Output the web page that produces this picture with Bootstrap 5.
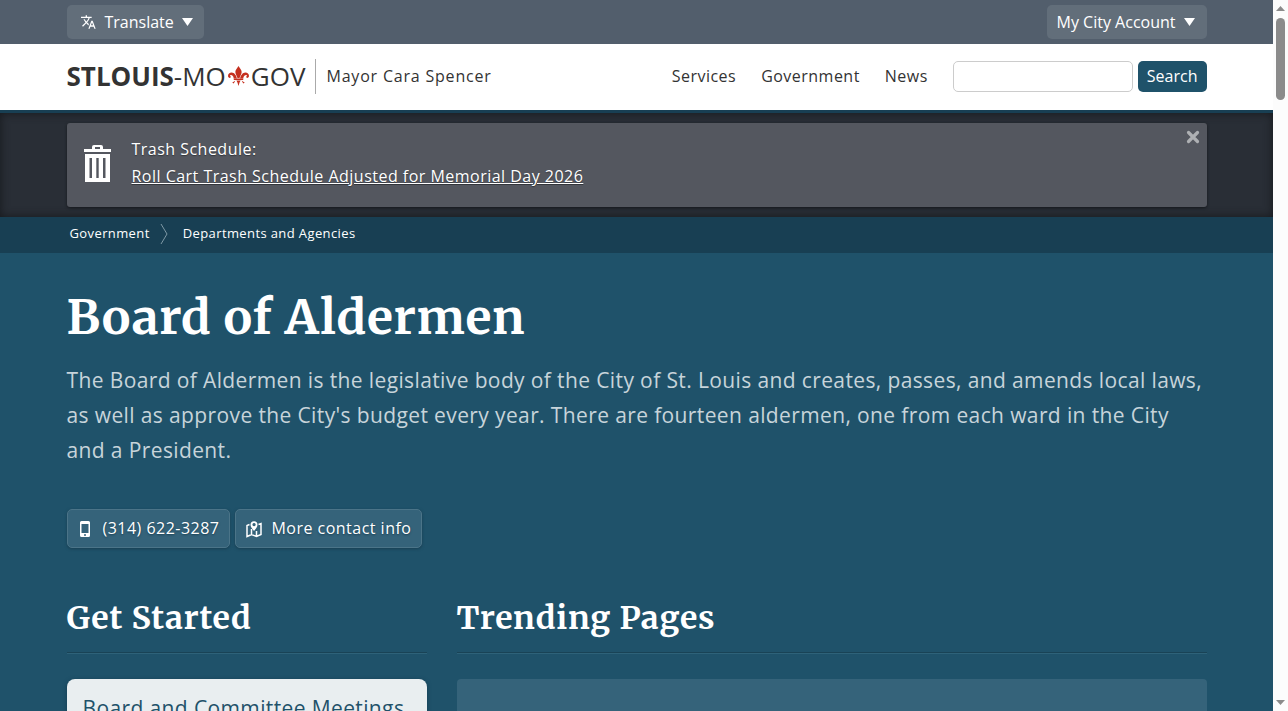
<!DOCTYPE html>
<html lang="en">
<head>
<meta charset="utf-8">
<meta name="viewport" content="width=device-width, initial-scale=1">
<title>Board of Aldermen</title>
<link href="https://cdn.jsdelivr.net/npm/bootstrap@5.3.0/dist/css/bootstrap.min.css" rel="stylesheet">
<style>
  body { font-family: "Open Sans", "Noto Sans", sans-serif; font-size: 16px; letter-spacing: .03em; background: #1f526a; color: #fff; }
  h1, h2 { font-family: Merriweather, "Noto Serif", serif; font-weight: 700; }
  .shell { height: 100vh; }
  .site-wrap { max-width: 1140px; width: 100%; margin: 0 auto; }
  .topbar { background: #525e6c; padding: 5px 0; }
  .btn-top { --bs-btn-color: #fff; --bs-btn-bg: #626e7a; --bs-btn-hover-color: #fff; --bs-btn-hover-bg: #6d7985; --bs-btn-border-width: 0; --bs-btn-border-radius: 5px; --bs-btn-padding-x: 10px; --bs-btn-padding-y: 5px; letter-spacing: normal; }
  .masthead { background: #fff; border-bottom: 3px solid #183f53; min-height: 69px; padding-bottom: 2px; color: #333; }
  .masthead a { color: #333; text-decoration: none; }
  .wordmark { font-size: 26px; line-height: 35px; letter-spacing: normal; padding-right: 10px; border-right: 1px solid #aaa; }
  .wordmark svg { margin: 0 2px; }
  .mayor { letter-spacing: .05em; padding-left: 10px; }
  .links { gap: 25px; margin-right: 25px; }
  .search-form { gap: 5px; }
  .search-box { width: 180px; height: 31px; min-height: 0; padding: 0 8px; line-height: 24px; border-color: #ccc; border-radius: 5px; }
  .btn-search { --bs-btn-color: #fff; --bs-btn-bg: #1f526a; --bs-btn-hover-color: #fff; --bs-btn-hover-bg: #183f53; --bs-btn-border-width: 0; --bs-btn-border-radius: 5px; --bs-btn-padding-x: 9px; --bs-btn-padding-y: 0; height: 31px; letter-spacing: normal; }
  .notice-band { background: #292e36; box-shadow: inset 0 0 10px #16191d; padding: 10px 0; }
  .notice { background: #54575f; border-radius: 3px; box-shadow: 0 1px 3px #15181c; padding: 13px 16px 17px; line-height: 27px; text-shadow: 0 1px 1px #33363c; }
  .notice-text { margin-left: 20px; }
  .dismiss { top: 0; right: 0; padding: 7px; line-height: 0; }
  .trail-band { background: #183f53; }
  .trail { font-size: 13px; letter-spacing: .03em; min-height: 36px; padding: 0 3px 2px; }
  .trail a { color: #fff; text-decoration: none; }
  .trail svg { margin: 0 15px 0 10px; }
  h1 { font-size: 48px; line-height: 60px; letter-spacing: .015em; margin: 34px 0 16px; }
  .intro { font-size: 21px; line-height: 35px; letter-spacing: .018em; color: #c7d4da; margin-bottom: 41px; }
  .contacts { gap: 5px; }
  .btn-contact { --bs-btn-color: #fff; --bs-btn-bg: #35637a; --bs-btn-border-color: #4b7488; --bs-btn-hover-color: #fff; --bs-btn-hover-bg: #40708a; --bs-btn-border-radius: 5px; --bs-btn-padding-x: 10px; --bs-btn-padding-y: 6px; --bs-btn-line-height: 25px; box-shadow: 0 1px 3px #183f53; text-shadow: 0 1px 2px #183f53; gap: 9px; }
  .topics { margin-top: 49px; gap: 30px; }
  .topic-start { flex: 0 0 360px; }
  h2 { font-size: 32px; line-height: 42px; letter-spacing: .025em; padding-bottom: 13px; margin-bottom: 26px; border-bottom: 1px solid #194356; box-shadow: 0 1px 0 #2e6279; }
  .meeting-card { background: #e9eef0; border-radius: 8px; box-shadow: 0 1px 4px #153c50; padding: 12px 16px; font-size: 21px; line-height: 35px; letter-spacing: .018em; min-height: 80px; }
  .meeting-card a { color: #1f526a; text-decoration: none; }
  .trend-card { background: #35637a; border-radius: 4px; min-height: 80px; }
  .scroll-rail { flex: 0 0 15px; background: #fcfcfc; padding: 6px 0; }
  .scroll-grip { width: 9px; height: 82px; border-radius: 5px; background: #8b8b8b; margin-top: 7px; }
</style>
</head>
<body>
<div class="shell d-flex overflow-hidden">
  <div class="flex-fill overflow-hidden">
    <div class="topbar">
      <div class="site-wrap d-flex justify-content-between">
        <button type="button" class="btn btn-top d-flex align-items-center gap-2">
          <svg width="20" height="16" viewBox="-4 0 28 24" fill="#fff" aria-hidden="true"><path d="M12.900 15.100l-2.600-2.500.1-.1A17.500 17.500 0 0 0 14.100 6H17V4h-7V2H8v2H1v2h11.200A15.700 15.700 0 0 1 9 11.400 15.700 15.700 0 0 1 6.700 8h-2a17.600 17.600 0 0 0 3 4.600L2.600 17.600 4 19l5-5 3.100 3.100.8-2zM18.500 10h-2L12 22h2l1.100-3h4.800l1.100 3h2l-4.500-12zm-2.600 7l1.600-4.300 1.600 4.300h-3.200z"/></svg>
          Translate
          <svg width="12" height="8" viewBox="0 0 12 8" aria-hidden="true"><path d="M0 0h11L5.500 8z" fill="#fff"/></svg>
        </button>
        <button type="button" class="btn btn-top d-flex align-items-center gap-2">
          My City Account
          <svg width="13" height="8" viewBox="0 0 13 8" aria-hidden="true"><path d="M0 0h11L5.500 8z" fill="#fff"/></svg>
        </button>
      </div>
    </div>

    <header class="masthead d-flex align-items-center">
      <div class="site-wrap d-flex align-items-center">
        <a class="wordmark d-flex align-items-center" href="#"><span><b>STLOUIS</b>-MO</span><svg width="21" height="20" viewBox="0 0 40 40" preserveAspectRatio="none" fill="#c5301f" aria-hidden="true"><path d="M20 0c3 5 6 8 6 12 0 4-3 8-4 12h-4c-1-4-4-8-4-12 0-4 3-7 6-12z"/><path d="M17 25c-1-6-5-12-10-12-4 0-7 3-7 7 0 3 3 5 5 3 1-2-1-3-1-4 1-2 6-1 7 6zM23 25c1-6 5-12 10-12 4 0 7 3 7 7 0 3-3 5-5 3-1-2 1-3 1-4-1-2-6-1-7 6z"/><path d="M11 25h18v3H11zM16 29h8l-2 4-2 7-2-7zM14 29l-3 6-3-2 2-1zM26 29l3 6 3-2-2-1z"/></svg><span>GOV</span></a>
        <a class="mayor" href="#">Mayor Cara Spencer</a>
        <nav class="links d-flex ms-auto" aria-label="Main">
          <a href="#">Services</a><a href="#">Government</a><a href="#">News</a>
        </nav>
        <form class="search-form d-flex" role="search">
          <label class="visually-hidden" for="q">Search this site</label>
          <input class="form-control search-box" id="q" type="search">
          <button class="btn btn-search" type="submit">Search</button>
        </form>
      </div>
    </header>

    <div class="notice-band">
      <div class="site-wrap notice position-relative d-flex align-items-center">
        <svg width="29" height="40" viewBox="0 -1 29 40" aria-hidden="true"><path fill="#fff" fill-rule="evenodd" d="M1 5h8V3q0-2 2-2h7q2 0 2 2v2h8v3H1zM12 5h5V3h-5zM2 10h25v28H2zM6.500 14v20H9V14zM13.300 14v20h2.400V14zM20 14v20h2.500V14z"/></svg>
        <div class="notice-text">Trash Schedule:<br><a class="text-white" href="#">Roll Cart Trash Schedule Adjusted for Memorial Day 2026</a></div>
        <button type="button" class="btn dismiss position-absolute border-0" aria-label="Close"><svg width="14" height="14" viewBox="0 0 14 14" aria-hidden="true"><path d="M2.500 2.500l9 9M11.500 2.500l-9 9" stroke="#aeb0b3" stroke-width="3.200" stroke-linecap="round"/></svg></button>
      </div>
    </div>

    <div class="trail-band">
      <nav class="site-wrap trail d-flex align-items-center" aria-label="Breadcrumb">
        <a href="#">Government</a>
        <svg width="8" height="20" viewBox="0 0 8 20" fill="none" stroke="#7f99a6" aria-hidden="true"><path d="M1 0l6 10-6 10"/></svg>
        <a href="#">Departments and Agencies</a>
      </nav>
    </div>

    <main class="site-wrap">
      <h1>Board of Aldermen</h1>
      <p class="intro">The Board of Aldermen is the legislative body of the City of St. Louis and creates, passes, and amends local laws, as well as approve the City's budget every year. There are fourteen aldermen, one from each ward in the City and a President.</p>
      <div class="contacts d-flex">
        <a class="btn btn-contact d-flex align-items-center" href="#"><svg width="16" height="18" viewBox="1 0 16 18" aria-hidden="true"><path fill="#fff" fill-rule="evenodd" d="M4.500 1h7Q13 1 13 2.500v13Q13 17 11.500 17h-7Q3 17 3 15.500v-13Q3 1 4.500 1zM4.500 4v9h7V4zM7 14.300v1.400h2v-1.400z"/></svg>(314) 622-3287</a>
        <a class="btn btn-contact d-flex align-items-center" href="#"><svg width="16" height="18" viewBox="0 0 16 18" fill="none" stroke="#fff" stroke-width="1.500" aria-hidden="true"><path d="M3.500 4.500L1 5.500v11l4.500-2 5 2 4.500-2v-11l-2.500 1M5.500 9v5.500M10.500 11v5.500"/><path d="M8 11C6 8.500 4.500 7 4.500 4.700a3.500 3.500 0 0 1 7 0C11.500 7 10 8.500 8 11zM8 3a1.600 1.600 0 1 0 .1 0z" fill="#fff" fill-rule="evenodd" stroke="none"/></svg>More contact info</a>
      </div>
      <div class="topics d-flex">
        <section class="topic-start">
          <h2>Get Started</h2>
          <div class="meeting-card"><a href="#">Board and Committee Meetings</a></div>
        </section>
        <section class="flex-fill">
          <h2>Trending Pages</h2>
          <div class="trend-card"></div>
        </section>
      </div>
    </main>
  </div>
  <div class="scroll-rail d-flex flex-column align-items-center" aria-hidden="true">
    <svg width="9" height="5" viewBox="0 0 9 5"><path d="M0 5l4.500-5L9 5z" fill="#8b8b8b"/></svg>
    <div class="scroll-grip"></div>
    <svg class="mt-auto" width="9" height="5" viewBox="0 0 9 5"><path d="M0 0l4.500 5L9 0z" fill="#8b8b8b"/></svg>
  </div>
</div>
<script src="https://cdn.jsdelivr.net/npm/bootstrap@5.3.0/dist/js/bootstrap.bundle.min.js"></script>
</body>
</html>
